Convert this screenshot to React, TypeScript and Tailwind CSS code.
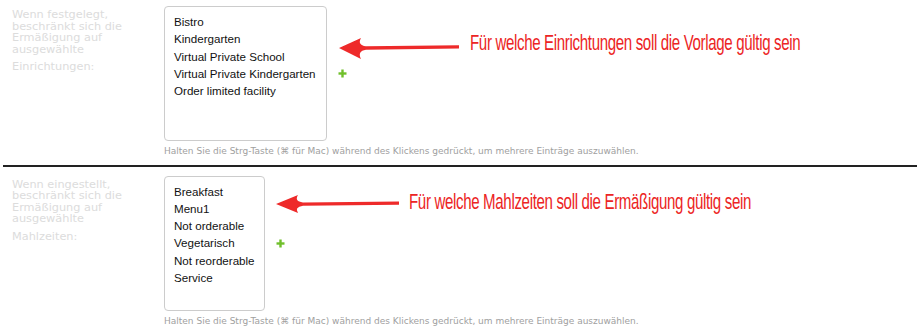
import React from "react";

const labelFont = { fontFamily: '"DejaVu Sans", sans-serif' };

function Plus() {
  return (
    <svg width="9" height="9" viewBox="0 0 9 9" className="shrink-0">
      <rect x="3.3" y="0.5" width="2.4" height="8" fill="#70bf2b" />
      <rect x="0.5" y="3.3" width="8" height="2.4" fill="#70bf2b" />
    </svg>
  );
}

function Section({
  lines,
  last,
  options,
  boxWidth,
}: {
  lines: string[];
  last: string;
  options: string[];
  boxWidth: string;
}) {
  return (
    <div className="flex">
      <div
        className="w-[164px] shrink-0 pl-[12px] pt-[3px] text-[11.3px] text-[#dcdcdc]"
        style={labelFont}
      >
        <div className="leading-[11.5px]">
          {lines.map((l) => (
            <div key={l} className="whitespace-nowrap">{l}</div>
          ))}
        </div>
        <div className="mt-[6px] leading-[11.5px]">{last}</div>
      </div>
      <div className="flex flex-col">
        <div className="flex items-center gap-[11px]">
          <div
            className={`${boxWidth} h-[135px] rounded-[4px] border border-[#cccccc] pl-[9px] pt-[6px] text-[11.6px] leading-[17.3px] text-[#111]`}
            style={{ fontFamily: '"Liberation Sans", Arial, sans-serif' }}
          >
            {options.map((o) => (
              <div key={o} className="whitespace-nowrap">
                {o}
              </div>
            ))}
          </div>
          <Plus />
        </div>
        <div
          className="mt-[5px] text-[9px] leading-[11px] text-[#a0a0a0] whitespace-nowrap"
          style={labelFont}
        >
          Halten Sie die Strg-Taste (⌘ für Mac) während des Klickens gedrückt, um mehrere Einträge auszuwählen.
        </div>
      </div>
    </div>
  );
}

export default function App() {
  return (
    <div className="relative w-[918px] h-[332px] overflow-hidden bg-white">
      <div className="pt-[6px]">
        <Section
          lines={["Wenn festgelegt,", "beschränkt sich die", "Ermäßigung auf", "ausgewählte"]}
          last="Einrichtungen:"
          options={[
            "Bistro",
            "Kindergarten",
            "Virtual Private School",
            "Virtual Private Kindergarten",
            "Order limited facility",
          ]}
          boxWidth="w-[163px]"
        />
      </div>
      <div className="ml-[3px] mr-[1px] mt-[8px] h-[1.5px] bg-[#222]" />
      <div className="pt-[9px]">
        <Section
          lines={["Wenn eingestellt,", "beschränkt sich die", "Ermäßigung auf", "ausgewählte"]}
          last="Mahlzeiten:"
          options={[
            "Breakfast",
            "Menu1",
            "Not orderable",
            "Vegetarisch",
            "Not reorderable",
            "Service",
          ]}
          boxWidth="w-[101px]"
        />
      </div>

      <svg
        className="pointer-events-none absolute left-0 top-0"
        width="918"
        height="332"
        viewBox="0 0 918 332"
      >
        <path
          d="M339,48 L361,38 Q357,45 366,46.3 L459,45.2 L459,48.4 L366,49.7 Q357,51 361,59 Z"
          fill="#ee2a2a"
        />
        <path
          d="M276,204 L298,195 Q294,201.5 303,202.4 L399,201.6 L399,204.8 L303,205.8 Q294,207 298,213 Z"
          fill="#ee2a2a"
        />
      </svg>

      <div
        className="absolute left-[470px] top-[30px] origin-left scale-x-[0.685] whitespace-nowrap text-[22px] leading-[26px] tracking-[-0.5px] text-[#ec2424]"
        style={{ fontFamily: '"Liberation Sans", Arial, sans-serif' }}
      >
        Für welche Einrichtungen soll die Vorlage gültig sein
      </div>
      <div
        className="absolute left-[409px] top-[189px] origin-left scale-x-[0.685] whitespace-nowrap text-[22px] leading-[26px] tracking-[-0.5px] text-[#ec2424]"
        style={{ fontFamily: '"Liberation Sans", Arial, sans-serif' }}
      >
        Für welche Mahlzeiten soll die Ermäßigung gültig sein
      </div>
    </div>
  );
}
